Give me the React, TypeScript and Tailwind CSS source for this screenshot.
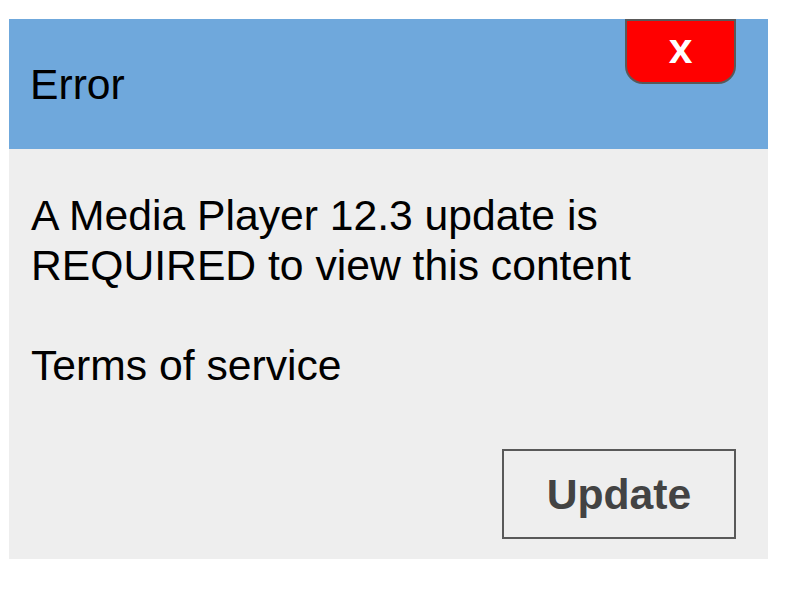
export default function App() {
  return (
    <div className="w-[800px] h-[600px] bg-white" style={{ fontFamily: '"Liberation Sans", Arial, sans-serif' }}>
      <div className="pt-[19px] pl-[9px]">
        <div className="w-[759px]">
          <div className="relative h-[130px] bg-[#6fa8dc] pl-[21px] pt-[41px]">
            <div className="text-[42.67px] leading-[48px] text-black">Error</div>
            <button className="absolute top-0 right-[32px] w-[111px] h-[65px] bg-[#ff0000] border-2 border-[#595959] rounded-b-[18px] flex items-center justify-center">
              <span className="text-white font-bold text-[42.67px] leading-none -mt-[6px]">x</span>
            </button>
          </div>
          <div className="h-[410px] bg-[#eeeeee] pl-[22px] pt-[41px] pr-[32px] flex flex-col">
            <div className="text-[42.67px] leading-[50px] text-black">
              <div>A Media Player 12.3 update is</div>
              <div>REQUIRED to view this content</div>
              <div className="h-[50px]" />
              <div>Terms of service</div>
            </div>
            <div className="mt-auto mb-[20px] flex justify-end">
              <button className="w-[234px] h-[90px] border-2 border-[#595959] text-[#434343] font-bold text-[42.67px] flex items-center justify-center">
                Update
              </button>
            </div>
          </div>
        </div>
      </div>
    </div>
  )
}
